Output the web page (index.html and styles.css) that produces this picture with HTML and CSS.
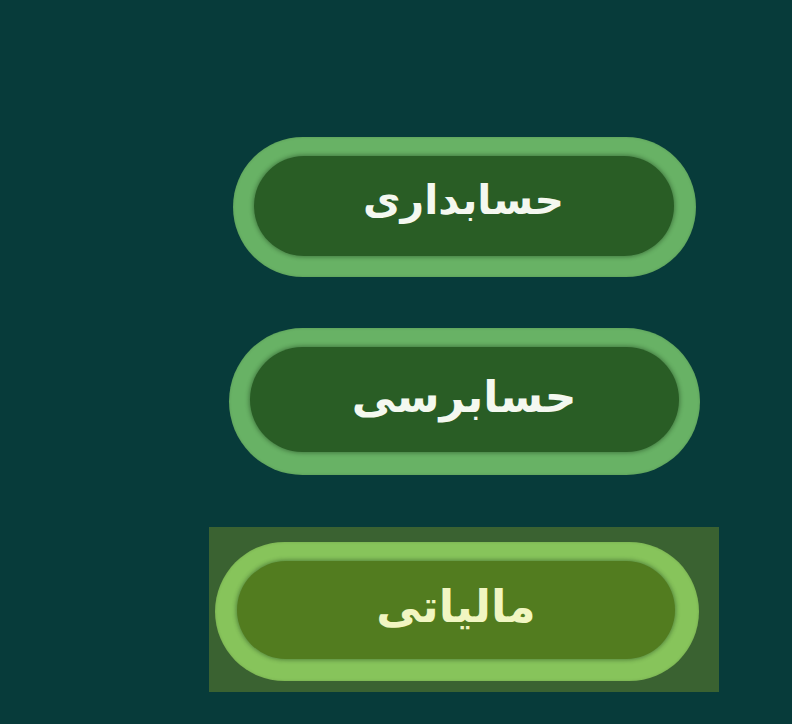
FILE: index.html
```html
<!DOCTYPE html>
<html lang="fa">
<head>
<meta charset="utf-8">
<title>منو</title>
<link rel="stylesheet" href="styles.css">
</head>
<body>
<main class="menu">
  <div class="item">
    <button class="pill pill--one"><span class="pill-inner" dir="rtl">حسابداری</span></button>
  </div>
  <div class="item">
    <button class="pill pill--two"><span class="pill-inner" dir="rtl">حسابرسی</span></button>
  </div>
  <div class="item item--active">
    <button class="pill pill--three"><span class="pill-inner" dir="rtl">مالیاتی</span></button>
  </div>
</main>
</body>
</html>
```
FILE: styles.css
```css
html, body {
  margin: 0;
  padding: 0;
}
body {
  width: 792px;
  height: 724px;
  background: #073b3a;
  overflow: hidden;
  font-family: "DejaVu Sans", "Noto Sans", sans-serif;
  direction: ltr;
}
.menu {
  display: flex;
  flex-direction: column;
  align-items: center;
  width: 520px;
  margin-left: 204px;
  padding-top: 137px;
  gap: 51px;
}
.item {
  display: flex;
  justify-content: center;
}
.item--active {
  background: #3a6231;
  padding: 15px 20px 11px 6px;
  margin-top: 1px;
}
.pill {
  display: flex;
  border: none;
  margin: 0;
  font: inherit;
  border-radius: 999px;
  background: #68b265;
  box-shadow: inset 0 0 3px rgba(0, 0, 0, 0.15);
  cursor: pointer;
}
.pill-inner {
  flex: 1;
  display: flex;
  align-items: center;
  justify-content: center;
  border-radius: 999px;
  background: #295d25;
  color: #f4f8f0;
  font-weight: bold;
  box-shadow: 0 0 4px 1px rgba(20, 50, 20, 0.45);
}
.pill--one {
  width: 463px;
  height: 140px;
  padding: 19px 22px 21px 21px;
}
.pill--one .pill-inner {
  font-size: 41px;
  padding-bottom: 12px;
}
.pill--two {
  width: 471px;
  height: 147px;
  padding: 19px 21px 23px 21px;
}
.pill--two .pill-inner {
  font-size: 44px;
  padding-bottom: 6px;
}
.pill--three {
  width: 484px;
  height: 139px;
  padding: 19px 24px 22px 22px;
  background: #87c45b;
}
.pill--three .pill-inner {
  background: #527c1f;
  color: #f1f6c2;
  font-size: 45px;
  padding-bottom: 8px;
}
```
